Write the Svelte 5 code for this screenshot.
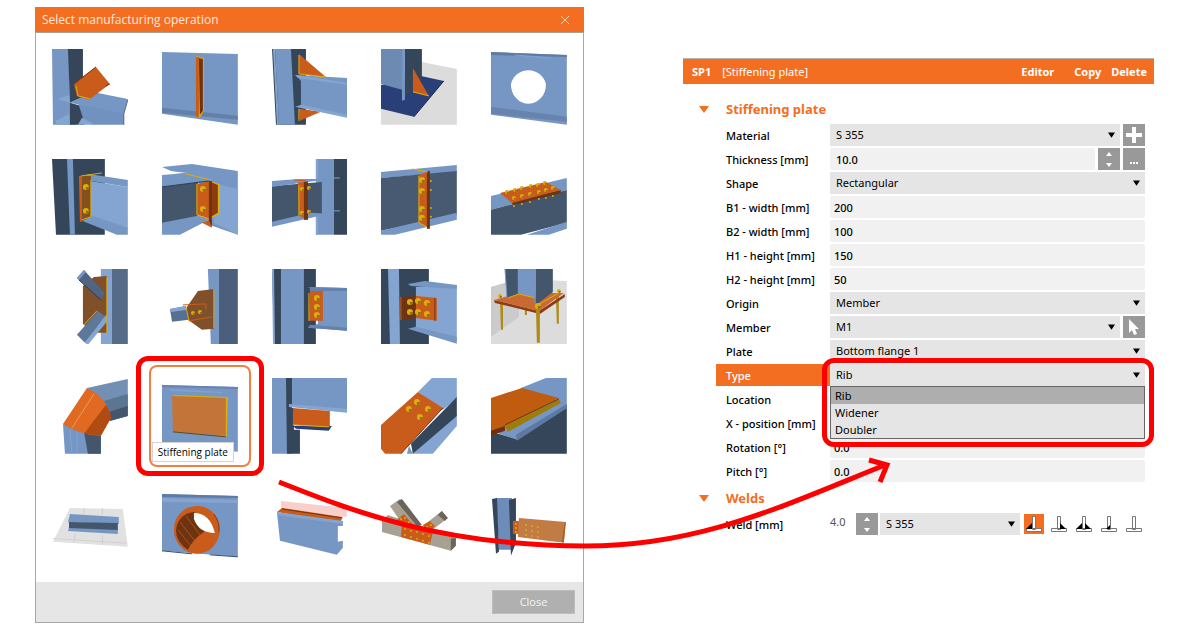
<script>
    // fills used by the operation thumbnails
    const L = '#7696c3';
    const B = '#84a4d1';
    const D = '#43566c';
    const N = '#35465a';
    const O = '#ca5c1b';
    const W = '#6f3311';
    const Y = '#dcae0c';
    const G = '#dcdcdc';

    // shapes: [fill, path], lines: [stroke, path], bolts: [x, y, r]
    const operations = [
        {
            name: 'Cut',
            shapes: [
                [L, 'M0 0H17L18 54L24 76H1z'], [N, 'M16 0H31V48L18 54z'], [N, 'M18 54L32 58V76H18z'],
                ['#7191bf', 'M26 54L72 60V76H40L32 72z'], [L, 'M18 54L41 43L76 50L72 65z'], [B, 'M5 50L17 46L18 54zM4 72L17 65L18 76H4zM30 69L44 76H26z'],
                [O, 'M22 35L44 18L58 35L37 51L25 47z']
            ],
            lines: [['#4d688f', 'M76 51L72 65V76'], [Y, 'M24 37L26 47L38 50'], [W, 'M22 35L44 18M54 37L58 35']]
        },
        {
            name: 'Stiffener',
            shapes: [
                [L, 'M0 3L76 5V76L0 65z'], ['#6580a8', 'M0 59L76 67V71L0 64z'], [Y, 'M34 7L42 9V62L38 69L34 67z'],
                [O, 'M34 8H37V68H34z'], [W, 'M37 9L41 10V62L38 66z']
            ]
        },
        {
            name: 'Widener',
            shapes: [
                [N, 'M0 0H34V76H4z'], [L, 'M3 0H19L23 76H7z'], [B, 'M1 0H3L7 76H5z'], [O, 'M27 5L54 28L27 25zM27 60L49 63L28 72z'],
                [L, 'M24 26L76 29V68L25 58L29 56V32z'], [B, 'M23 26L32 27L76 34V36L26 29zM23 58L30 56L76 66V69z']
            ],
            lines: [[Y, 'M27 6V25L54 28'], [Y, 'M27 60V72']]
        },
        {
            name: 'Rib',
            shapes: [
                [G, 'M41 13L76 20V76H0V40z'], ['#293f78', 'M0 36L40 27L63 32L33 68L0 60z'], ['#6d8bb2', 'M0 0H22V41L0 35z'],
                [N, 'M24 0H41V30L24 49z'], [L, 'M21 0H24V51L21 52z'], [O, 'M32 19L48 47L32 43z']
            ],
            lines: [[Y, 'M32 43L48 47'], ['#19284f', 'M33 68L63 32']]
        },
        {
            name: 'Opening',
            shapes: [
                [L, 'M0 3L76 6V76L0 66z'], ['#5f7ba4', 'M0 3L76 6V8L0 6z'], ['#6883ad', 'M0 58L76 68V73L0 65z'],
                [N, 'M20 34A18 19 0 0 0 30 53L22 45z'], ['#fff', 'M20 35A18 18 0 0 1 55 35A18 19 0 0 1 38 55A18 19 0 0 1 20 35z']
            ],
            lines: [['#84a4d1', 'M24 6L60 9']]
        },
        {
            name: 'End plate',
            shapes: [
                [N, 'M0 0H53V76H4z'], [L, 'M15 0H21L23 76H18z'], ['#fff', 'M53 76L66 76L38 60H53z'], [B, 'M38 22L76 28V70L38 58z'],
                [L, 'M30 18L37 15L76 21V28L34 21zM30 62L40 57L76 69V76H65z'], ['#83511f', 'M29 17H39V58L29 63z'], [O, 'M27 17H30V63H28z']
            ],
            lines: [[Y, 'M29 17L50 14'], [Y, 'M39 21V58L30 61']],
            bolts: [[34, 28, 3], [34, 52, 3]]
        },
        {
            name: 'Shear plate',
            shapes: [
                [L, 'M0 8L30 5L76 12V76L50 67V30z'], [B, 'M52 24L76 30V76L52 64z'], [D, 'M0 28L36 23V62L0 65z'],
                ['#fff', 'M0 11L25 14L0 16z'], [L, 'M0 16L25 14L48 22L0 28zM0 64L36 57L49 60L18 76H0z'],
                [Y, 'M48 22L58 25V55L48 60z'], ['#8d3c12', 'M49 23L56 26V54L49 58z'], [O, 'M35 25L48 22V60L35 56zM40 64L50 60V69z'], [W, 'M47 22H50V68L47 62z']
            ],
            lines: [[Y, 'M24 15L49 21'], [Y, 'M35 25V56L46 60'], ['#2d3c50', 'M0 28L47 22']],
            bolts: [[41, 30, 3], [41, 50, 3]]
        },
        {
            name: 'Splice',
            shapes: [
                [L, 'M44 0H62V76H44z'], [B, 'M44 0H46V76H44z'], [N, 'M62 0H76V76H62z'], [D, 'M0 27L50 23V56L0 64z'],
                [L, 'M0 22L27 20L57 20L0 28zM0 63L39 54L57 55L0 68z'], [O, 'M26 24L36 22V61L27 57z'], [W, 'M32 23H36V61H32z']
            ],
            lines: [[O, 'M22 21L34 22'], [Y, 'M27 26V57'], [B, 'M62 19H68M62 52H68']],
            bolts: [[30, 30, 2], [37, 29, 2], [30, 54, 2], [37, 53, 2]]
        },
        {
            name: 'Plate to plate',
            shapes: [
                [L, 'M0 13L76 6V13L0 19z'], ['#475a72', 'M0 19L76 12V56L0 72z'], [L, 'M0 72L76 54V61L14 76H0z'],
                [O, 'M38 16L48 12V69L38 64z'], [W, 'M46 12H49V70H46z']
            ],
            lines: [[Y, 'M31 10L47 13'], [Y, 'M38 17V64L46 68']],
            bolts: [[41, 21, 3], [41, 32, 3], [41, 50, 3], [41, 59, 3], [50, 22, 1], [50, 31, 1], [50, 49, 1], [50, 58, 1]]
        },
        {
            name: 'Cover plate',
            shapes: [
                [L, 'M0 37L76 19V31L0 51z'], [D, 'M0 51L76 31V64L30 76H0z'], [L, 'M36 76L76 63V70L58 76z'],
                [W, 'M20 42L70 31V34L22 46z'], [O, 'M9 34L55 23L70 31L21 44z']
            ],
            bolts: [
                [16, 33, 2], [24, 31, 2], [31, 29, 2], [40, 27, 2], [47, 26, 2], [54, 24, 2], [23, 39, 2], [31, 37, 2], [39, 35, 2],
                [48, 33, 2], [55, 31, 2], [62, 29, 2], [23, 47, 1], [31, 45, 1], [39, 43, 1], [48, 40, 1], [55, 39, 1], [62, 37, 1]
            ]
        },
        {
            name: 'Gusset plate',
            shapes: [
                [B, 'M49 0H60V76H49z'], ['#556b87', 'M60 0H76V76H60z'], ['#80502b', 'M31 17L42 8L55 7V64H40L31 55z'],
                ['#4f6581', 'M25 9L32 1L53 24L49 31z'], [L, 'M25 9L32 1L34 3L27 11z'], ['#5d7899', 'M25 66L46 42L54 48L33 74z'], [B, 'M33 74L54 46L58 49L36 76z']
            ],
            lines: [[Y, 'M55 8V64'], [Y, 'M32 56L45 42'], ['#2d3c50', 'M27 11L49 31']]
        },
        {
            name: 'Connecting plate',
            shapes: [
                [L, 'M46 0H57V76H49z'], ['#4a5f7b', 'M57 0H76V76H57z'], ['#80502b', 'M25 38L36 22L52 20V60L40 61L25 50z'],
                ['#58708f', 'M8 40L24 37L27 51L10 53z'], [B, 'M8 40L24 37L24 41L9 43z']
            ],
            lines: [[Y, 'M52 20V59M24 38L27 52'], [O, 'M21 36L44 35V41M27 52L50 48']],
            bolts: [[31, 44, 2], [38, 43, 2]]
        },
        {
            name: 'Fin plate',
            shapes: [
                [N, 'M0 0H44V76H2z'], [L, 'M9 0H32V76H9z'], [B, 'M0 0H2L3 76H1z'], [L, 'M36 18L76 19V62L36 59L46 55V22z'],
                ['#6482ad', 'M38 18L76 19V22H38zM38 56L76 59V62L36 59z'], [O, 'M38 22H51V52H37z']
            ],
            lines: [[Y, 'M37 24V52']],
            bolts: [[45, 29, 3], [45, 38, 3], [45, 46, 3]]
        },
        {
            name: 'Cleat',
            shapes: [
                [N, 'M0 0H48V76H0z'], [B, 'M7 0H18L19 76H9z'], [B, 'M35 18L76 16V72L35 60z'], [L, 'M27 15L44 12L76 16V20L30 17zM27 60L35 58L76 68V75z'],
                [W, 'M19 28L35 27V49L21 51z'], [O, 'M35 27L56 29V52L35 49z']
            ],
            lines: [[O, 'M20 28V51'], [W, 'M54 29V52']],
            bolts: [[29, 33, 3], [37, 32, 3], [46, 34, 3], [29, 43, 3], [37, 43, 3], [46, 45, 3]]
        },
        {
            name: 'Base plate',
            shapes: [
                [G, 'M0 18L28 10L76 12V76H0z'], ['#cbcbcb', 'M0 18L28 10V48L0 68z'], ['#b08a14', 'M9 30H12V61H10zM34 38H36V46H34zM65 24H68V55H66z'],
                ['#8e3b13', 'M3 31L48 42L74 25V28L49 45L4 34z'], ['#c96a33', 'M3 31L28 24L73 24L48 42z'],
                [D, 'M14 0H27V25L16 29z'], [L, 'M27 0H45V29L27 24z'], ['#43566c', 'M45 0H62V23L45 36z'], ['#b08a14', 'M45 38H49V74H46z']
            ],
            lines: [[Y, 'M17 29L28 25L44 29M47 36L68 24'], [L, 'M14 0L16 29M44 0V34']],
            bolts: [[9, 27, 2], [47, 37, 3], [68, 22, 2]]
        },
        {
            name: 'Bent pipe',
            shapes: [
                ['#7390b4', 'M35 10L76 1V38L58 43z'], ['#5b7593', 'M52 23L76 16V30L58 36z'], [D, 'M57 34L76 28V38L58 43z'],
                [L, 'M11 46L13 76H49V58z'], [D, 'M32 54L49 58V76H36z'],
                ['#e06a22', 'M35 10Q56 20 59 40L49 58Q28 57 11 46z'], ['#b04b12', 'M54 27Q59 34 59 40L49 58L32 56z']
            ],
            lines: [['#f29a5c', 'M42 16L20 50'], [B, 'M18 52L20 76M25 54V76']]
        },
        {
            name: 'Stiffening plate',
            shapes: [
                [L, 'M0 7L76 9V74L0 66z'], ['#6883ad', 'M0 7L76 9V11L0 9z'], ['#82a2cf', 'M8 11L60 14V15L8 13z'],
                [Y, 'M10 17L66 19L65 59L62 58z'], ['#c37539', 'M10 18L64 20V58L11 54z']
            ],
            lines: [['#5b4a1c', 'M11 54L64 59']]
        },
        {
            name: 'Notch',
            shapes: [
                [L, 'M0 0H76V34L20 28V76H0z'], [N, 'M14 0H20V30H22V52H28V76H15z'], [B, 'M17 26L76 31V35L17 29z'],
                ['#293f78', 'M21 48L60 48L57 53L24 51z'], [O, 'M21 30L58 33V49L21 47z']
            ],
            lines: [[Y, 'M21 47L57 49']]
        },
        {
            name: 'Bolted lap',
            shapes: [
                [B, 'M51 0H76V20L62 32L37 14zM76 36V48L52 76H32z'], [L, 'M28 68L32 76H26z'], [N, 'M76 19V38L32 76L30 66z'],
                [O, 'M0 47L37 14L62 30L20 76H4L0 71z']
            ],
            lines: [[W, 'M62 30L20 76']],
            bolts: [[36, 24, 3], [28, 31, 3], [47, 31, 3], [39, 39, 3]]
        },
        {
            name: 'Welded lap',
            shapes: [
                [N, 'M0 54L26 61L76 28V76H0z'], [L, 'M30 10L55 0H76V30L26 62L8 56z'], ['#5d7aa2', 'M25 57L76 26V30L26 63z'],
                ['#9f7b09', 'M14 48L68 21L70 25L17 54z'], ['#6f2f0b', 'M0 52L14 47V53L0 58z'], ['#c05c10', 'M0 20L31 10L68 20L14 48L0 53z']
            ],
            lines: [[W, 'M14 47L68 21']]
        },
        {
            name: 'Workplane',
            shapes: [
                ['#e1e1e1', 'M18 20L71 21L76 59L1 54z'], ['#cfcfcf', 'M32 20H33L32 26H31zM50 20H51V27H50zM1 50L75 55V56L1 51zM24 46L22 55L21 55L23 46zM50 47H51V57H50z'],
                [L, 'M18 26L67 29V36L16 34z'], [D, 'M17 34L66 35V43L17 41z'], [L, 'M17 40L66 42V46L16 43z']
            ]
        },
        {
            name: 'Pipe opening',
            shapes: [
                [L, 'M0 6L76 8V69L0 63z'], ['#5f7ba4', 'M0 6L76 8V10L0 9z'], [B, 'M0 10L76 12V15L0 14z'],
                [O, 'M12 42A23 23 0 0 1 58 40A23 25 0 0 1 35 66A23 24 0 0 1 12 42z'], [W, 'M14 42Q16 26 32 24Q46 32 42 44Q30 52 26 62Q14 54 14 42z'],
                ['#fff', 'M32 25Q48 25 53 45Q37 45 32 31z']
            ],
            lines: [['#a3521f', 'M18 34L32 52M16 42L28 57M24 28L38 47'], ['#39506f', 'M0 63L30 66M48 67L76 69'], ['#8f3c10', 'M52 26Q58 34 57 44']]
        },
        {
            name: 'Cold formed',
            shapes: [
                ['#f7cfcb', 'M9 13L75 20V29L9 21z'], [O, 'M5 24L10 20L71 29L68 35z'], [L, 'M5 25L71 33V38L66 38V54L71 53V60L65 67L8 53z'],
                [B, 'M5 24L71 33V36L5 27z']
            ],
            lines: [[W, 'M10 21L70 30']]
        },
        {
            name: 'Timber gusset',
            shapes: [
                ['#a7a193', 'M1 32L7 27L75 50V58L70 63L1 44zM9 18L19 11L40 38L28 46zM42 38L61 23L67 30L50 43z'],
                ['#6b6559', 'M16 14L21 11L41 37L36 38zM75 50V58L70 63V51zM61 23L67 30L64 33L57 27z'],
                [O, 'M21 37L52 44L49 57L20 49zM16 32L23 26L33 38L24 43zM42 37L49 33L54 38L48 45z']
            ],
            bolts: [
                [20, 31, 1], [24, 30, 1], [24, 35, 1], [28, 34, 1], [24, 41, 1], [24, 47, 1], [30, 43, 1], [30, 49, 1], [36, 44, 1],
                [36, 51, 1], [42, 46, 1], [42, 53, 1], [48, 48, 1], [48, 55, 1], [46, 39, 1], [50, 37, 1]
            ]
        },
        {
            name: 'Timber plate',
            shapes: [
                ['#6c8cb9', 'M5 10H21V62H8z'], [N, 'M1 11L6 10L8 64L5 66zM18 12L25 10V55L20 68z'], [O, 'M22 33H28V46H22z'],
                ['#c17b45', 'M28 30L75 34L73 55L27 49z'], ['#a85f2c', 'M74 34L75 34L73 55L71 54z']
            ],
            bolts: [
                [25, 36, 1], [25, 40, 1], [25, 44, 1], [35, 37, 1], [35, 42, 1], [35, 47, 1], [41, 38, 1], [41, 43, 1], [41, 48, 1],
                [47, 39, 1], [47, 44, 1], [47, 49, 1]
            ]
        }
    ];

    const rows = [
        { label: 'Material', kind: 'select', value: 'S 355', action: 'plus' },
        { label: 'Thickness [mm]', kind: 'spin', value: '10.0', action: 'more' },
        { label: 'Shape', kind: 'select', value: 'Rectangular' },
        { label: 'B1 - width [mm]', kind: 'text', value: '200' },
        { label: 'B2 - width [mm]', kind: 'text', value: '100' },
        { label: 'H1 - height [mm]', kind: 'text', value: '150' },
        { label: 'H2 - height [mm]', kind: 'text', value: '50' },
        { label: 'Origin', kind: 'select', value: 'Member' },
        { label: 'Member', kind: 'select', value: 'M1', action: 'pick' },
        { label: 'Plate', kind: 'select', value: 'Bottom flange 1' },
        { label: 'Type', kind: 'select', value: 'Rib', options: ['Rib', 'Widener', 'Doubler'] },
        { label: 'Location', kind: 'select', value: '' },
        { label: 'X - position [mm]', kind: 'text', value: '' },
        { label: 'Rotation [°]', kind: 'text', value: '0.0' },
        { label: 'Pitch [°]', kind: 'text', value: '0.0' }
    ];

    const welds = [
        { name: 'Fillet left', fill: 'M2 15L8 9V15z' },
        { name: 'Fillet right', fill: 'M11 9L17 15H11z' },
        { name: 'Fillet both', fill: 'M2 15L8 9V15zM11 9L17 15H11z' },
        { name: 'Butt', fill: 'M7 15L11 11V15z' },
        { name: 'No weld', fill: '' }
    ];

    let selected = $state('Stiffening plate');
    let weldType = $state('Fillet left');
</script>

{#snippet spinner(name)}
    <button class="square" aria-label="Step {name}">
        <svg viewBox="0 0 22 22"><path fill="#fff" d="M8 8L11 4L14 8zM8 15H14L11 19z" /></svg>
    </button>
{/snippet}

{#snippet dropdown(id, value, options)}
    <div class="dropdown">
        <select {id} {value} aria-label={id === 'weld-material' ? 'Weld material' : undefined}>
            {#each options ?? [value] as option}
                <option value={option}>{option}</option>
            {/each}
        </select>
        <svg class="caret" viewBox="0 0 8 6"><path d="M0 0H8L4 6z" /></svg>
    </div>
{/snippet}

<main>
    <section class="dialog">
        <header>
            <h1>Select manufacturing operation</h1>
            <button class="close" aria-label="Close window">
                <svg viewBox="0 0 10 10"><path d="M1 1L9 9M9 1L1 9" /></svg>
            </button>
        </header>

        <div class="operations">
            {#each operations as op}
                <button
                    class="operation"
                    class:selected={selected === op.name}
                    aria-label={op.name}
                    onclick={() => (selected = op.name)}
                >
                    <svg viewBox="0 0 76 76">
                        {#each op.shapes as [fill, d]}
                            <path {fill} {d} />
                        {/each}
                        {#each op.lines ?? [] as [stroke, d]}
                            <path fill="none" {stroke} {d} />
                        {/each}
                        {#each op.bolts ?? [] as [cx, cy, r]}
                            <circle {cx} {cy} {r} fill={Y} />
                            {#if r > 1}
                                <path fill="#8c7010" d="M{cx} {cy}h{r}a{r} {r} 0 0 1 -{r} {r}z" />
                            {/if}
                        {/each}
                    </svg>
                    {#if selected === op.name}
                        <span class="tip">{op.name}</span>
                    {/if}
                </button>
            {/each}
        </div>

        <footer>
            <button>Close</button>
        </footer>
    </section>

    <section class="panel">
        <header>
            <strong>SP1</strong>
            <span>[Stiffening plate]</span>
            <nav>
                <button class="editor">Editor</button>
                <button>Copy</button>
                <button>Delete</button>
            </nav>
        </header>

        <h2><svg viewBox="0 0 10 7"><path d="M0 0H10L5 7z" /></svg>Stiffening plate</h2>
        <div class="rows">
            {#each rows as row, i}
                <div class="row" class:active={row.options}>
                    <label for="field{i}">{row.label}</label>
                    <div class="field">
                        {#if row.kind === 'select'}
                            {@render dropdown(`field${i}`, row.value, row.options)}
                        {:else}
                            <input id="field{i}" class:indent={row.kind === 'spin'} type="text" value={row.value} />
                        {/if}
                        {#if row.kind === 'spin'}
                            {@render spinner(row.label)}
                        {/if}
                        {#if row.action === 'plus'}
                            <button class="square" aria-label="Add material">
                                <svg viewBox="0 0 22 22"><path fill="#fff" d="M9 3H13V9H19V13H13V19H9V13H3V9H9z" /></svg>
                            </button>
                        {:else if row.action === 'more'}
                            <button class="square" aria-label="More">
                                <svg viewBox="0 0 22 22"><path fill="#fff" d="M7 14H9V16H7zM10 14H12V16H10zM13 14H15V16H13z" /></svg>
                            </button>
                        {:else if row.action === 'pick'}
                            <button class="square" aria-label="Pick member">
                                <svg viewBox="0 0 22 22"><path fill="#fff" d="M6 3L16 13H12L14 18L11 19L9 14L6 17z" /></svg>
                            </button>
                        {/if}
                        {#if row.options}
                            <ul class="list" role="listbox" aria-label={row.label}>
                                {#each row.options as option}
                                    <li role="option" aria-selected={option === row.value}>{option}</li>
                                {/each}
                            </ul>
                        {/if}
                    </div>
                </div>
            {/each}
        </div>

        <h2 class="second"><svg viewBox="0 0 10 7"><path d="M0 0H10L5 7z" /></svg>Welds</h2>
        <div class="rows">
            <div class="row">
                <label for="weld">Weld [mm]</label>
                <div class="field weld">
                    <input id="weld" type="text" value="4.0" />
                    {@render spinner('weld')}
                    {@render dropdown('weld-material', 'S 355')}
                    <div class="types">
                        {#each welds as weld}
                            <button
                                class:on={weldType === weld.name}
                                aria-label={weld.name}
                                onclick={() => (weldType = weld.name)}
                            >
                                <svg viewBox="0 0 20 20">
                                    <path class="joint" d="M8.5 2.5H11.5V15.5H8.5zM2.5 14.5H17.5V17.5H2.5z" />
                                    <path d={weld.fill} />
                                </svg>
                            </button>
                        {/each}
                    </div>
                </div>
            </div>
        </div>
    </section>

    <svg class="arrow" viewBox="0 0 1200 630">
        <path d="M279 482C350 510 440 546 585 546C700 546 780 507 885 465" />
        <path d="M869 460L887 465L880 482" />
    </svg>
</main>

<style>
    :global(body) {
        margin: 0;
        background: #fff;
    }

    main {
        position: relative;
        display: grid;
        grid-template-columns: 549fr 471fr;
        column-gap: 99px;
        align-items: start;
        padding: 7px 46px 7px 35px;
        font-family: 'Segoe UI', 'Open Sans', 'Noto Sans', sans-serif;
        font-size: 12px;
        line-height: 16px;
        color: #000;
    }

    button,
    input,
    select {
        box-sizing: border-box;
        margin: 0;
        padding: 0;
        border: 0;
        border-radius: 0;
        background: none;
        font: inherit;
        color: inherit;
    }

    svg {
        display: block;
    }

    .dialog {
        border: 1px solid #a8a8a8;
        border-top: 0;
    }

    .dialog header {
        display: flex;
        align-items: center;
        justify-content: space-between;
        height: 25px;
        margin: 0 -1px;
        padding: 0 14px 0 7px;
        border-bottom: 1px solid #a8a090;
        background: #f46e22;
        color: #ffe9dc;
    }

    h1 {
        margin: 0;
        font-size: 12px;
        font-weight: 400;
    }

    .close svg {
        width: 10px;
        height: 10px;
        fill: none;
        stroke: #ffd9c2;
    }

    .operations {
        display: grid;
        grid-template-columns: repeat(5, 1fr);
        gap: 8px;
        padding: 3px 3px 5px;
    }

    .operation {
        position: relative;
        aspect-ratio: 1;
        padding: 11px;
        border: 2px solid transparent;
        border-radius: 8px;
    }

    .operation svg {
        width: 100%;
    }

    .operation.selected {
        border-color: #f08040;
    }

    .operation.selected::after {
        content: '';
        position: absolute;
        inset: -11px -15px;
        border: 5px solid #f00;
        border-radius: 12px;
    }

    .tip {
        position: absolute;
        left: 1px;
        bottom: 3px;
        padding: 1px 5px;
        border: 1px solid #d4d4d4;
        background: #fff;
        font-size: 10px;
        white-space: nowrap;
    }

    footer {
        display: flex;
        justify-content: flex-end;
        padding: 8px;
        background: #e6e6e6;
    }

    footer button {
        width: 83px;
        height: 24px;
        border: 1px solid #bdbdbd;
        background: #b0b0b0;
        color: #f4f4f4;
        font-size: 11px;
    }

    .panel {
        margin-top: 51px;
        font-family: 'Segoe UI', 'Noto Sans', 'Open Sans', sans-serif;
        font-size: 11px;
    }

    .panel header {
        display: flex;
        align-items: center;
        gap: 11px;
        height: 25px;
        padding: 0 7px 0 9px;
        border-top: 1px solid #b9b4b0;
        background: #f46e22;
        color: #fff;
    }

    nav {
        display: flex;
        gap: 10px;
        margin-left: auto;
        font-weight: 700;
    }

    .editor {
        margin-right: 10px;
    }

    h2 {
        display: flex;
        align-items: center;
        gap: 17px;
        margin: 15px 0 5px;
        padding-left: 16px;
        font-size: 13px;
        line-height: 20px;
        font-weight: 700;
        color: #f46e22;
    }

    h2 svg {
        width: 10px;
        height: 7px;
        fill: #f46e22;
    }

    h2.second {
        margin: 6px 0 5px;
    }

    .rows {
        display: grid;
        gap: 2px;
        padding: 0 9px 0 33px;
    }

    .row {
        display: grid;
        grid-template-columns: 114px 1fr;
        height: 22px;
    }

    label {
        padding: 4px 0 2px 10px;
        font-weight: 500;
        white-space: nowrap;
    }

    .active label {
        background: #f46e22;
        color: #fff;
    }

    .field {
        position: relative;
        display: flex;
        gap: 3px;
    }

    input {
        flex: 1;
        min-width: 0;
        padding: 1px 4px 0;
        border-radius: 2px;
        background: #f1f1f1;
        font-weight: 500;
    }

    input.indent {
        padding-left: 6px;
    }

    .dropdown {
        position: relative;
        flex: 1;
    }

    select {
        display: block;
        width: 100%;
        height: 22px;
        padding: 0 6px;
        appearance: none;
        background: #e5e5e5;
    }

    .caret {
        position: absolute;
        top: 8px;
        right: 5px;
        width: 7px;
        height: 6px;
        pointer-events: none;
    }

    .square {
        width: 22px;
        height: 22px;
        background: #999;
    }

    .active .field::after {
        content: '';
        position: absolute;
        inset: -6px -9px auto -8px;
        z-index: 2;
        height: 79px;
        border: 5px solid #f00;
        border-radius: 12px;
    }

    .list {
        position: absolute;
        top: 22px;
        left: 0;
        right: 0;
        z-index: 1;
        margin: 0;
        padding: 0;
        border: 1px solid #666;
        background: #e5e5e5;
        list-style: none;
        line-height: 17px;
    }

    .list li {
        padding: 0 4px;
    }

    .list [aria-selected='true'] {
        background: #aeaeae;
    }

    .weld {
        gap: 2px;
    }

    .weld input {
        flex: 0 0 24px;
        padding: 0 0 4px;
        background: none;
        color: #555;
        font-weight: 400;
    }

    .types {
        display: flex;
        align-items: center;
        gap: 5px;
        padding: 0 1px 0 2px;
    }

    .types button {
        width: 20px;
        height: 20px;
    }

    .types .joint {
        fill: #fff;
        stroke: #777;
    }

    .types .on {
        background: #f46e22;
    }

    .arrow {
        position: absolute;
        top: 0;
        left: 0;
        z-index: 3;
        width: 100%;
        fill: none;
        stroke: #f00;
        stroke-width: 5;
        pointer-events: none;
    }
</style>
